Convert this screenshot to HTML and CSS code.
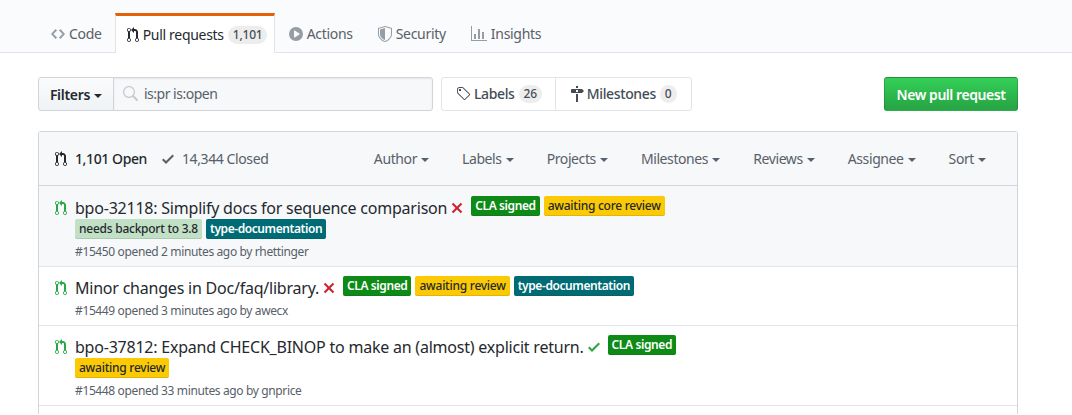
FILE: index.html
```html
<!DOCTYPE html>
<html>
<head>
    <meta charset="UTF-8">
    <title>Pull requests</title>
    <link rel="stylesheet" href="styles.css">
</head>
<body>
    <svg class="sprite" width="0" height="0">
        <symbol id="i-pr" viewBox="0 0 12 16"><path d="M11 11.28V5c-.03-.78-.34-1.47-.94-2.06C9.46 2.35 8.78 2.03 8 2H7V0L4 3l3 3V4h1c.27.02.48.11.69.31.21.2.3.42.31.69v6.28A1.993 1.993 0 0 0 10 15a1.993 1.993 0 0 0 1-3.72zm-1 2.92c-.66 0-1.2-.55-1.2-1.2 0-.65.55-1.2 1.2-1.2.65 0 1.2.55 1.2 1.2 0 .65-.55 1.2-1.2 1.2zM4 3c0-1.11-.89-2-2-2a1.993 1.993 0 0 0-1 3.72v6.56A1.993 1.993 0 0 0 2 15a1.993 1.993 0 0 0 1-3.72V4.72c.59-.34 1-.98 1-1.72zm-.8 10c0 .66-.55 1.2-1.2 1.2-.65 0-1.2-.55-1.2-1.2 0-.65.55-1.2 1.2-1.2.65 0 1.2.55 1.2 1.2zM2 4.2C1.34 4.2.8 3.65.8 3c0-.65.55-1.2 1.2-1.2.65 0 1.2.55 1.2 1.2 0 .65-.55 1.2-1.2 1.2z"/></symbol>
        <symbol id="i-code" viewBox="0 0 14 16"><path d="M9.5 3L8 4.5 11.5 8 8 11.5 9.5 13 14 8 9.5 3zm-5 0L0 8l4.5 5L6 11.5 2.5 8 6 4.5 4.5 3z"/></symbol>
        <symbol id="i-play" viewBox="0 0 14 16"><path fill-rule="evenodd" d="M14 8A7 7 0 1 1 0 8a7 7 0 0 1 14 0zm-8.223 3.482l4.599-3.066a.5.5 0 0 0 0-.832L5.777 4.518A.5.5 0 0 0 5 4.934v6.132a.5.5 0 0 0 .777.416z"/></symbol>
        <symbol id="i-shield" viewBox="0 0 14 16"><path fill-rule="evenodd" d="M0 2l7-2 7 2v6.02C14 12.69 8.69 16 7 16c-1.69 0-7-3.31-7-7.98V2zm1 .75L7 1l6 1.75v5.268C13 12.104 8.449 15 7 15c-1.449 0-6-2.896-6-6.982V2.75zm1 .75L7 2v12c-1.207 0-5-2.482-5-5.985V3.5z"/></symbol>
        <symbol id="i-graph" viewBox="0 0 16 16"><path d="M16 14v1H0V0h1v14h15zM5 13H3V8h2v5zm4 0H7V3h2v10zm4 0h-2V6h2v7z"/></symbol>
        <symbol id="i-tag" viewBox="0 0 15 16"><path fill-rule="evenodd" d="M7.73 1.73C7.26 1.26 6.62 1 5.96 1H3.5C2.13 1 1 2.13 1 3.5v2.47c0 .66.27 1.3.73 1.77l6.06 6.06c.39.39 1.02.39 1.41 0l4.59-4.59a.996.996 0 0 0 0-1.41L7.73 1.73zM2.38 7.09c-.31-.3-.47-.7-.47-1.13V3.5c0-.88.72-1.59 1.59-1.59h2.47c.42 0 .83.16 1.13.47l6.14 6.13-4.73 4.73-6.13-6.15zM3.01 3h2v2H3V3h.01z"/></symbol>
        <symbol id="i-milestone" viewBox="0 0 14 16"><path fill-rule="evenodd" d="M8 2H6V0h2v2zm4 5H2c-.55 0-1-.45-1-1V4c0-.55.45-1 1-1h10l2 2-2 2zM8 4H6v2h2V4zM6 16h2V8H6v8z"/></symbol>
        <symbol id="i-check" viewBox="0 0 12 16"><path d="M12 5l-8 8-4-4 1.5-1.5L4 10l6.5-6.5L12 5z"/></symbol>
        <symbol id="i-x" viewBox="0 0 12 16"><path d="M7.48 8l3.75 3.75-1.48 1.48L6 9.48l-3.75 3.75-1.48-1.48L4.52 8 .77 4.25l1.48-1.48L6 6.52l3.75-3.75 1.48 1.48L7.48 8z"/></symbol>
        <symbol id="i-search" viewBox="0 0 16 16"><path d="M15.7 13.3l-3.81-3.83A5.93 5.93 0 0 0 13 6c0-3.31-2.69-6-6-6S1 2.69 1 6s2.69 6 6 6c1.3 0 2.48-.41 3.47-1.11l3.83 3.81c.19.2.45.3.7.3.25 0 .52-.09.7-.3a.996.996 0 0 0 0-1.41v.01zM7 10.7c-2.59 0-4.7-2.11-4.7-4.7 0-2.59 2.11-4.7 4.7-4.7 2.59 0 4.7 2.11 4.7 4.7 0 2.59-2.11 4.7-4.7 4.7z"/></symbol>
    </svg>

    <div class="pagehead">
        <nav class="tabs">
            <a class="tab tab-code"><svg class="icon w14"><use href="#i-code"/></svg>Code</a>
            <a class="tab tab-active"><svg class="icon w12"><use href="#i-pr"/></svg>Pull requests<span class="counter">1,101</span></a>
            <a class="tab"><svg class="icon w14"><use href="#i-play"/></svg>Actions</a>
            <a class="tab"><svg class="icon w14"><use href="#i-shield"/></svg>Security</a>
            <a class="tab"><svg class="icon w16"><use href="#i-graph"/></svg>Insights</a>
        </nav>
    </div>

    <main class="container">
        <div class="toolbar">
            <div class="search-group">
                <button class="filters">Filters<span class="caret"></span></button>
                <div class="search-box">
                    <svg class="search-icon"><use href="#i-search"/></svg>
                    <span>is:pr is:open</span>
                </div>
            </div>
            <div class="nav-links">
                <a class="nav-link"><svg class="icon w15"><use href="#i-tag"/></svg>Labels<span class="counter">26</span></a>
                <a class="nav-link"><svg class="icon w14"><use href="#i-milestone"/></svg>Milestones<span class="counter">0</span></a>
            </div>
            <button class="new-pr">New pull request</button>
        </div>

        <div class="issues">
            <div class="issues-head">
                <div class="states">
                    <a class="state state-open"><svg class="icon w12"><use href="#i-pr"/></svg>1,101 Open</a>
                    <a class="state"><svg class="icon w12"><use href="#i-check"/></svg>14,344 Closed</a>
                </div>
                <div class="menus">
                    <a class="menu">Author<span class="caret"></span></a>
                    <a class="menu">Labels<span class="caret"></span></a>
                    <a class="menu">Projects<span class="caret"></span></a>
                    <a class="menu">Milestones<span class="caret"></span></a>
                    <a class="menu">Reviews<span class="caret"></span></a>
                    <a class="menu">Assignee<span class="caret"></span></a>
                    <a class="menu">Sort<span class="caret"></span></a>
                </div>
            </div>

            <div class="issue issue-first">
                <svg class="icon w12 pr-open"><use href="#i-pr"/></svg>
                <div class="issue-main">
                    <div class="issue-title">
                        <a class="title-link">bpo-32118: Simplify docs for sequence comparison</a>
                        <svg class="status status-fail"><use href="#i-x"/></svg>
                        <span class="label green">CLA signed</span>
                        <span class="label yellow">awaiting core review</span>
                        <span class="label mint">needs backport to 3.8</span>
                        <span class="label teal">type-documentation</span>
                    </div>
                    <div class="issue-meta">#15450 opened 2 minutes ago by rhettinger</div>
                </div>
            </div>

            <div class="issue">
                <svg class="icon w12 pr-open"><use href="#i-pr"/></svg>
                <div class="issue-main">
                    <div class="issue-title">
                        <a class="title-link">Minor changes in Doc/faq/library.</a>
                        <svg class="status status-fail"><use href="#i-x"/></svg>
                        <span class="label green">CLA signed</span>
                        <span class="label yellow">awaiting review</span>
                        <span class="label teal">type-documentation</span>
                    </div>
                    <div class="issue-meta">#15449 opened 3 minutes ago by awecx</div>
                </div>
            </div>

            <div class="issue">
                <svg class="icon w12 pr-open"><use href="#i-pr"/></svg>
                <div class="issue-main">
                    <div class="issue-title">
                        <a class="title-link">bpo-37812: Expand CHECK_BINOP to make an (almost) explicit return.</a>
                        <svg class="status status-ok"><use href="#i-check"/></svg>
                        <span class="label green">CLA signed</span>
                        <span class="label yellow">awaiting review</span>
                    </div>
                    <div class="issue-meta">#15448 opened 33 minutes ago by gnprice</div>
                </div>
            </div>

            <div class="issue issue-next"></div>
        </div>
    </main>
</body>
</html>
```

FILE: styles.css
```css
* {
    box-sizing: border-box;
}
html, body {
    height: 100%;
    overflow: hidden;
}
body {
    margin: 0;
    background: #fff;
    color: #24292e;
    font-family: "Noto Sans", "Open Sans", sans-serif;
    font-size: 14px;
    line-height: 20px;
    letter-spacing: -0.3px;
}
.sprite {
    position: absolute;
}
.icon {
    height: 16px;
    flex: none;
    fill: currentColor;
    margin-right: 5px;
}
.w12 { width: 12px; }
.w14 { width: 14px; }
.w15 { width: 15px; }
.w16 { width: 16px; }

/* top tabs */
.pagehead {
    height: 53px;
    padding: 13px 0 0 38px;
    background: #fafbfc;
    border-bottom: 1px solid #e1e4e8;
}
.tabs {
    display: flex;
    height: 40px;
}
.tab {
    display: flex;
    align-items: center;
    height: 39px;
    padding: 3px 12px 0 13px;
    color: #586069;
    white-space: nowrap;
}
.tab-code {
    padding-right: 13px;
}
.tab .icon {
    color: #959da5;
    margin-right: 4px;
}
.tab-active {
    width: 160px;
    height: 40px;
    padding: 0 0 0 11px;
    margin-right: 1px;
    background: #fff;
    color: #24292e;
    border: 1px solid #e1e4e8;
    border-width: 3px 1px 0;
    border-top-color: #e36209;
}
.tab-active .icon {
    color: #24292e;
}
.counter {
    display: inline-block;
    margin-left: 4px;
    padding: 0 5px;
    border-radius: 10px;
    background: rgba(27, 31, 35, .08);
    font-size: 12px;
    line-height: 18px;
    font-weight: 500;
    letter-spacing: -0.2px;
    color: #444d56;
}

/* filter row */
.container {
    width: 980px;
    margin-left: 38px;
}
.toolbar {
    display: flex;
    height: 34px;
    margin-top: 24px;
}
.search-group {
    display: flex;
    width: 395px;
}
.filters {
    width: 76px;
    padding: 0;
    border: 1px solid #d1d5da;
    border-radius: 3px 0 0 3px;
    background: linear-gradient(#fafbfc, #eff3f6);
    color: #24292e;
    font: 600 14px "Noto Sans", sans-serif;
    letter-spacing: -0.3px;
}
.caret {
    display: inline-block;
    margin-left: 4px;
    vertical-align: 2px;
    border: 4px solid transparent;
    border-top-color: currentColor;
    border-bottom-width: 0;
}
.search-box {
    flex: 1;
    display: flex;
    align-items: center;
    margin-left: -1px;
    padding-left: 8px;
    border: 1px solid #d1d5da;
    border-radius: 0 3px 3px 0;
    background: #f6f8fa;
    box-shadow: inset 0 1px 2px rgba(27, 31, 35, .075);
    color: #586069;
    letter-spacing: -0.5px;
}
.search-icon {
    width: 16px;
    height: 16px;
    margin-right: 6px;
    fill: #c6cbd1;
}
.nav-links {
    display: flex;
    width: 251px;
    margin-left: 8px;
    border: 1px solid #e1e4e8;
    border-radius: 3px;
}
.nav-link {
    display: flex;
    align-items: center;
    padding: 0 13px 0 14px;
    font-weight: 500;
    letter-spacing: -0.38px;
    color: #444d56;
}
.nav-link + .nav-link {
    flex: 1;
    border-left: 1px solid #e1e4e8;
}
.nav-link .icon {
    margin-right: 3px;
}
.new-pr {
    width: 134px;
    margin-left: auto;
    padding: 0;
    border: 1px solid rgba(27, 31, 35, .2);
    border-radius: 3px;
    background: linear-gradient(#34d058, #28a745 90%);
    color: #fff;
    font: 600 14px "Noto Sans", sans-serif;
    letter-spacing: -0.45px;
}

/* issue list */
.issues {
    margin-top: 20px;
    border: 1px solid #d1d5da;
    border-radius: 3px 3px 0 0;
    border-bottom: 0;
}
.issues-head {
    display: flex;
    align-items: center;
    justify-content: space-between;
    height: 53px;
    padding: 0 31px 0 16px;
    background: #f6f8fa;
}
.states {
    display: flex;
    gap: 15px;
}
.state {
    display: flex;
    align-items: center;
    color: #586069;
    letter-spacing: -0.4px;
}
.state .icon {
    margin-right: 8px;
}
.state-open {
    color: #24292e;
    font-weight: 500;
}
.menus {
    display: flex;
    gap: 33px;
}
.menu {
    color: #586069;
    letter-spacing: -0.4px;
}
.issue {
    display: flex;
    padding: 9px 16px 5px;
    border-top: 1px solid #e1e4e8;
}
.issue-first {
    padding-top: 10px;
    border-top-color: #d1d5da;
    background: #f6f8fa;
}
.issue-next {
    height: 9px;
    padding: 0;
}
.pr-open {
    color: #28a745;
    margin: 4px 8px 0 0;
}
.issue-main {
    flex: 1;
}
.issue-title {
    display: flex;
    flex-wrap: wrap;
    column-gap: 4px;
    row-gap: 1px;
    max-width: 620px;
}
.title-link {
    height: 22px;
    font-size: 16px;
    line-height: 24px;
    letter-spacing: -0.22px;
    color: #24292e;
}
.status {
    width: 12px;
    height: 16px;
    margin: 4px 4px 0 0;
}
.status-fail { fill: #cb2431; }
.status-ok { fill: #28a745; }
.label {
    height: 20px;
    padding: 0 4px;
    border-radius: 2px;
    font-size: 12px;
    font-weight: 500;
    line-height: 20px;
    letter-spacing: -0.25px;
    box-shadow: inset 0 -1px 0 rgba(27, 31, 35, .12);
}
.green { background: #0e8a16; color: #fff; font-weight: 600; letter-spacing: -0.4px; }
.yellow { background: #fbca04; color: #24292e; }
.mint { background: #c2e0c6; color: #24292e; }
.teal { background: #006b75; color: #fff; font-weight: 600; letter-spacing: -0.42px; }
.issue-meta {
    margin-top: 4px;
    font-size: 12px;
    line-height: 18px;
    letter-spacing: -0.37px;
    color: #586069;
}
```
